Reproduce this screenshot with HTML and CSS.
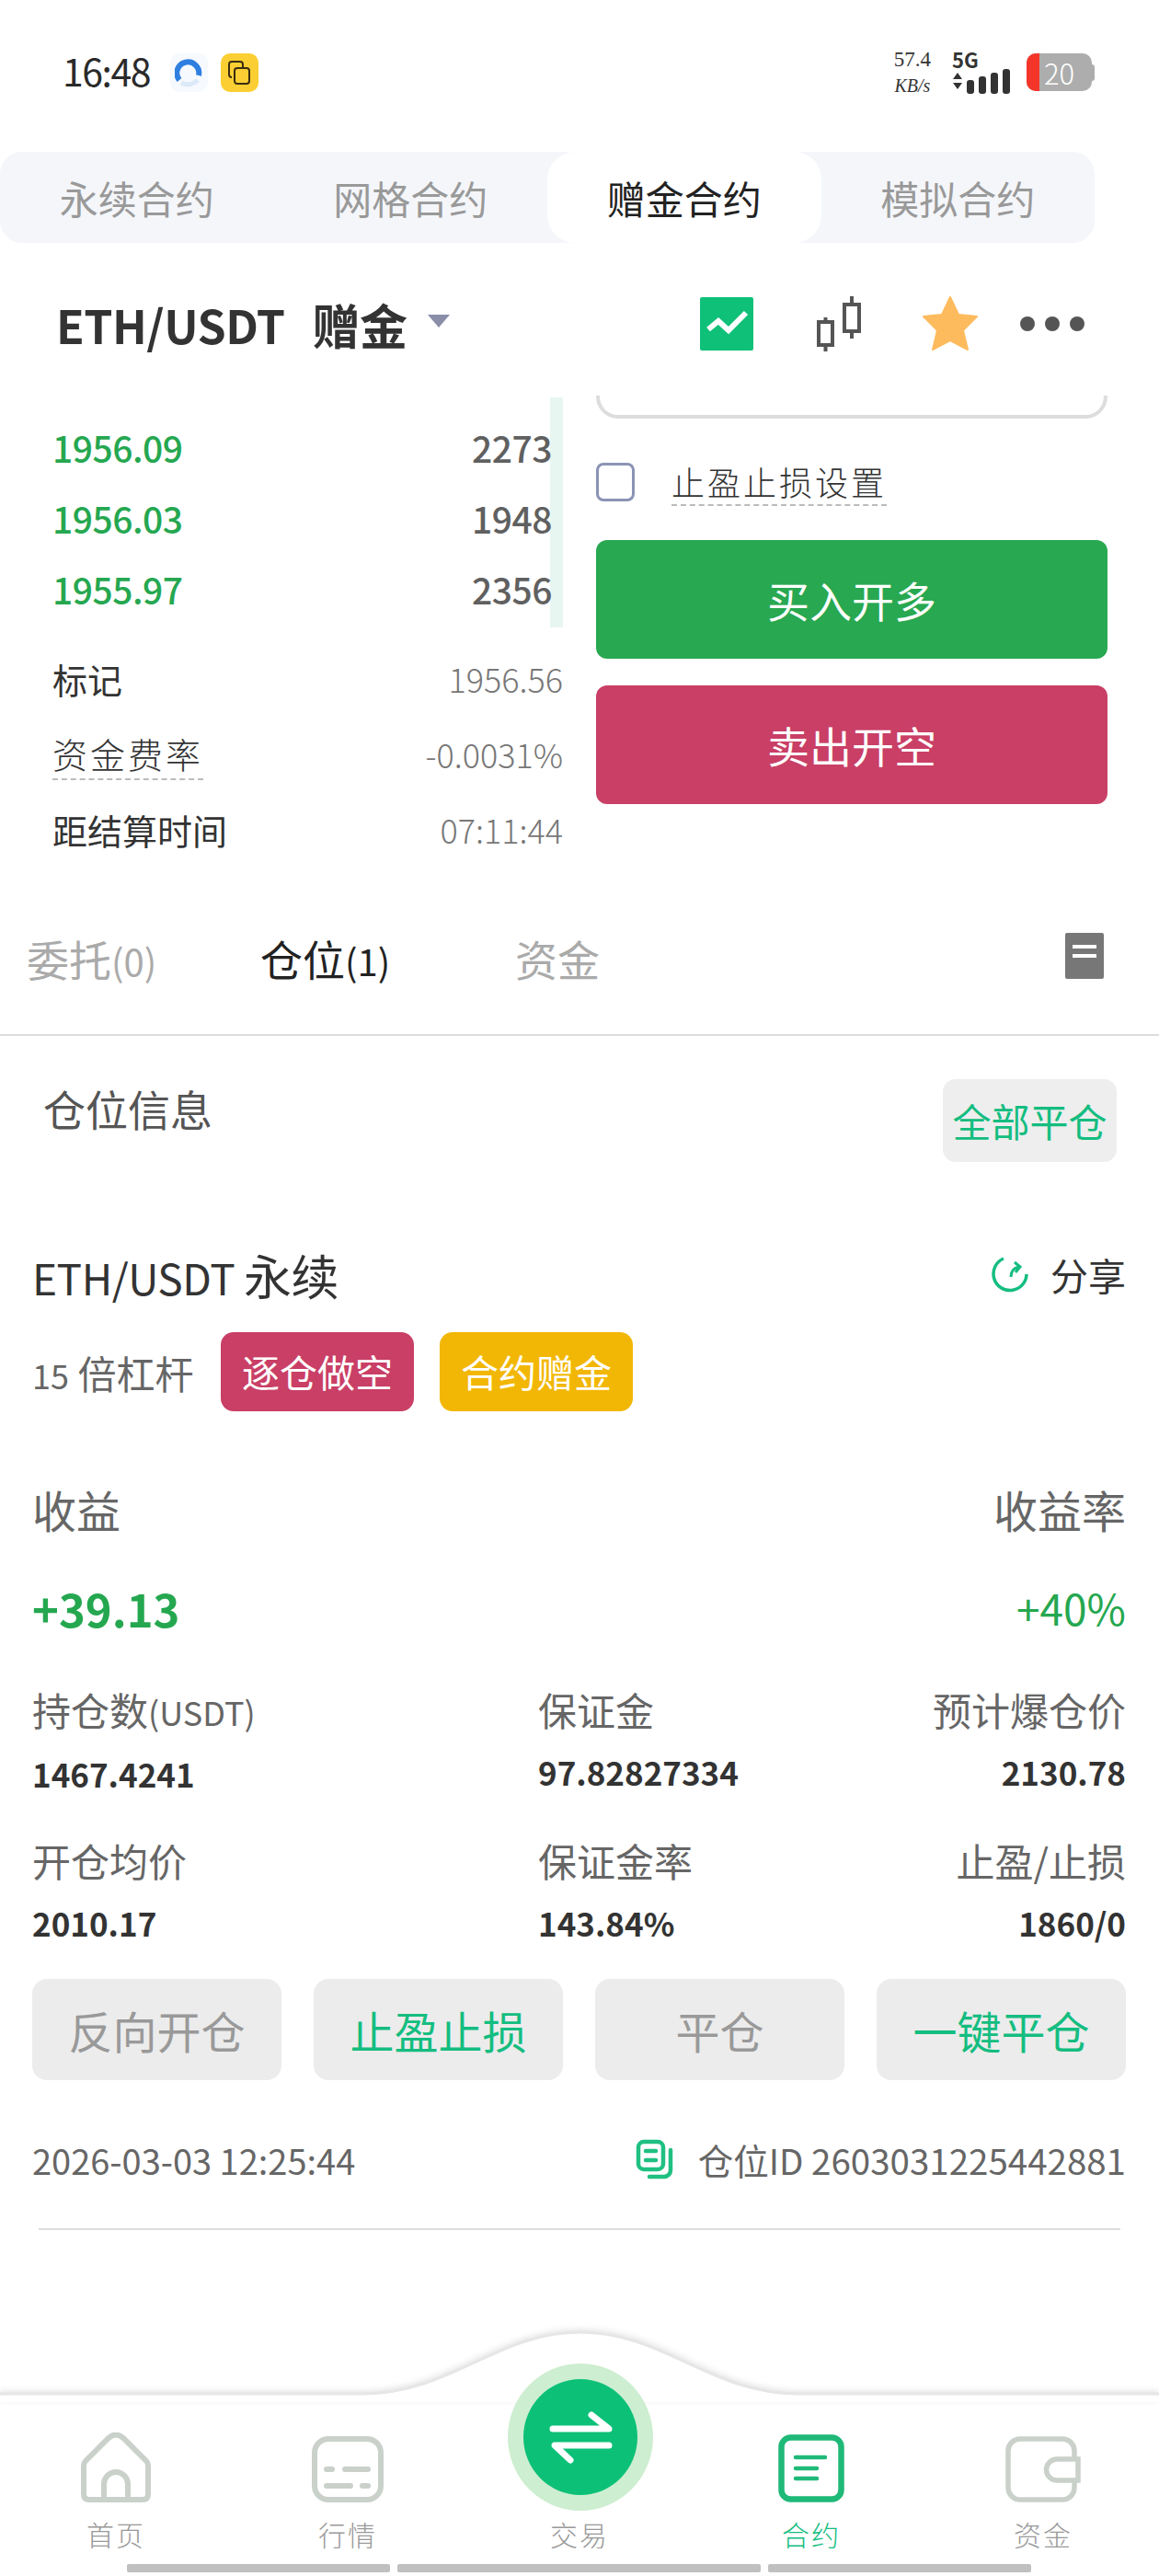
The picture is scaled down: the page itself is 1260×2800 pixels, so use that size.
FILE: index.html
```html
<!DOCTYPE html>
<html lang="zh-CN">
<head>
    <meta charset="UTF-8">
    <meta name="viewport" content="width=device-width, initial-scale=1.0">
    <title>赠金合约</title>
    <link rel="stylesheet" href="styles.css">
</head>
<body>
    <div class="page">
        <div class="status">
            <div class="status-left">
                <span class="clock">16:48</span>
                <span class="app-icon app-blue">
                    <svg width="30" height="32" viewBox="0 0 30 32" fill="none"><path d="M5 24A12 12 0 1 1 26 19" stroke="#2f7fe0" stroke-width="6"/><path d="M7 27c6 3 13 2 18-3" stroke="#dbe9f8" stroke-width="5"/></svg>
                </span>
                <span class="app-icon app-yellow">
                    <svg width="26" height="28" viewBox="0 0 26 28" fill="none" stroke="#3a2c10" stroke-width="2"><path d="M5 19q-3 0-3-3V5q0-3 3-3h9q3 0 3 3v4"/><rect x="8" y="9" width="16" height="17" rx="3"/></svg>
                </span>
            </div>
            <div class="status-right">
                <div class="speed"><span>57.4</span><span class="speed-unit">KB/s</span></div>
                <div class="signal">
                    <span class="net">5G</span>
                    <svg width="66" height="30" viewBox="0 0 66 30" fill="#333"><path d="M1 11 6 4l5 7zM1 15h10l-5 7z"/><rect x="16" y="12" width="8" height="15" rx="3"/><rect x="29" y="8" width="8" height="19" rx="3"/><rect x="42" y="4" width="8" height="23" rx="3"/><rect x="55" y="0" width="8" height="27" rx="3"/></svg>
                </div>
                <div class="battery"><span class="battery-low"></span><span class="battery-num">20</span></div>
                <span class="battery-tip"></span>
            </div>
        </div>

        <div class="mode-tabs">
            <div class="mode-tab">永续合约</div>
            <div class="mode-tab">网格合约</div>
            <div class="mode-tab active">赠金合约</div>
            <div class="mode-tab">模拟合约</div>
        </div>

        <div class="pair-bar">
            <div class="pair-name">ETH/USDT<span class="pair-kind">赠金</span><span class="caret"></span></div>
            <div class="pair-tools">
                <svg class="tool-chart" width="58" height="58" viewBox="0 0 58 58"><rect width="58" height="58" rx="2" fill="#0fc078"/><path d="M9 35l11-9 11 10 19-19" fill="none" stroke="#fff" stroke-width="6"/></svg>
                <svg class="tool-candle" width="48" height="60" viewBox="0 0 48 60" fill="none" stroke="#555" stroke-width="4"><rect x="2" y="28" width="15" height="25"/><path d="M9.500 23v5M9.500 53v7"/><rect x="30" y="9" width="16" height="29"/><path d="M38 0v9M38 38v8"/></svg>
                <svg class="tool-star" width="60" height="60" viewBox="0 0 60 60"><path d="M30 1l9 19 20 2-15 15 5 21-19-10-19 10 5-21L1 22l20-2z" fill="#fdbb5e" stroke="#fdbb5e" stroke-width="2" stroke-linejoin="round"/></svg>
                <div class="dots"><i></i><i></i><i></i></div>
            </div>
        </div>

        <div class="trade">
            <div class="book">
                <div class="depth">
                    <div class="level"><span class="price">1956.09</span><span class="qty">2273</span></div>
                    <div class="level"><span class="price">1956.03</span><span class="qty">1948</span></div>
                    <div class="level"><span class="price">1955.97</span><span class="qty">2356</span></div>
                </div>
                <div class="info-list">
                    <div class="info"><span>标记</span><span class="info-val">1956.56</span></div>
                    <div class="info"><span class="dashed thin">资金费率</span><span class="info-val">-0.0031%</span></div>
                    <div class="info"><span>距结算时间</span><span class="info-val">07:11:44</span></div>
                </div>
            </div>
            <div class="order">
                <div class="input-end"></div>
                <div class="tp-row"><span class="checkbox"></span><span class="dashed thin tp-label">止盈止损设置</span></div>
                <div class="order-btn buy">买入开多</div>
                <div class="order-btn sell">卖出开空</div>
            </div>
        </div>

        <div class="list-tabs">
            <span class="list-tab">委托<small>(0)</small></span>
            <span class="list-tab current">仓位<small>(1)</small></span>
            <span class="list-tab">资金</span>
            <svg class="doc" width="42" height="50" viewBox="0 0 42 50"><path d="M0 2a2 2 0 0 1 2-2h38a2 2 0 0 1 2 2v46a2 2 0 0 1-2 2H2a2 2 0 0 1-2-2z" fill="#777"/><path d="M8 15h26M8 25h26" stroke="#fff" stroke-width="4"/></svg>
        </div>

        <div class="pos-head">
            <span>仓位信息</span>
            <span class="close-all">全部平仓</span>
        </div>

        <div class="position">
            <div class="pos-title">
                <span class="symbol">ETH/USDT <em>永续</em></span>
                <span class="share">
                    <svg width="42" height="42" viewBox="0 0 42 42" fill="none" stroke="#14bd80" stroke-width="3.500"><path d="M13 4A18 18 0 1 0 38 21"/><path d="M21 24c0-6 3-10 9-11M25 8l6 5-5 6" stroke-width="3"/></svg>
                    分享
                </span>
            </div>
            <div class="tags">
                <span class="lever"><small>15</small> 倍杠杆</span>
                <span class="tag tag-red">逐仓做空</span>
                <span class="tag tag-yellow">合约赠金</span>
            </div>
            <div class="profit-labels"><span>收益</span><span>收益率</span></div>
            <div class="profit-values"><span class="profit">+39.13</span><span class="rate">+40%</span></div>
            <div class="stats">
                <div class="stat"><span class="stat-k">持仓数<small>(USDT)</small></span><b>1467.4241</b></div>
                <div class="stat"><span class="stat-k">保证金</span><b>97.82827334</b></div>
                <div class="stat end"><span class="stat-k">预计爆仓价</span><b>2130.78</b></div>
                <div class="stat"><span class="stat-k">开仓均价</span><b>2010.17</b></div>
                <div class="stat"><span class="stat-k">保证金率</span><b>143.84%</b></div>
                <div class="stat end"><span class="stat-k">止盈/止损</span><b>1860/0</b></div>
            </div>
            <div class="actions">
                <div class="action">反向开仓</div>
                <div class="action green">止盈止损</div>
                <div class="action">平仓</div>
                <div class="action green">一键平仓</div>
            </div>
            <div class="pos-foot">
                <span>2026-03-03 12:25:44</span>
                <span class="pos-id">
                    <svg width="42" height="44" viewBox="0 0 42 44" fill="none" stroke="#1fc082" stroke-width="4.500" stroke-linecap="round"><path d="M3 27V9a6 6 0 0 1 6-6h15a6 6 0 0 1 6 6v18a6 6 0 0 1-6 6H9a6 6 0 0 1-6-6z"/><path d="M11 13h11M11 23h11"/><path d="M38 12v22a7 7 0 0 1-7 7H15"/></svg>
                    仓位ID 2603031225442881
                </span>
            </div>
        </div>
        <div class="pos-line"></div>

        <div class="nav">
            <svg class="nav-curve" width="1260" height="80" viewBox="0 0 1260 80"><path d="M-10 71H394C490 71 540 4 631 4S772 71 868 71H1270V95H-10z" fill="#fff" stroke="#e6e6e6" stroke-width="3"/></svg>
            <div class="swap">
                <svg width="70" height="60" viewBox="0 0 70 60" fill="none" stroke="#fff" stroke-width="7" stroke-linecap="round" stroke-linejoin="round"><path d="M5 21H66L47 6M66 39H7l17 16"/></svg>
            </div>
            <div class="nav-items">
                <div class="nav-item">
                    <svg width="76" height="76" viewBox="0 0 76 76" fill="none" stroke="#c9d1ca" stroke-width="6"><path d="M3 36q0-3 2-5L30 6q8-7 16 0L71 31q2 2 2 5v31q0 6-6 6H9q-6 0-6-6z"/><path d="M25 73V56a13 13 0 0 1 26 0V73"/></svg>
                    <span>首页</span>
                </div>
                <div class="nav-item">
                    <svg width="78" height="72" viewBox="0 0 78 72" fill="none" stroke="#c9d1ca" stroke-linecap="round"><rect x="3" y="3" width="72" height="66" rx="15" stroke-width="6" /><path d="M16 36h6M36 36h25M16 54h26M55 54h6" stroke-width="6"/></svg>
                    <span>行情</span>
                </div>
                <div class="nav-item swap-item"><span>交易</span></div>
                <div class="nav-item on">
                    <svg width="72" height="74" viewBox="0 0 72 74" fill="none" stroke="#1fb978" stroke-linecap="round"><rect x="3.500" y="3.500" width="65" height="67" rx="10" stroke-width="6.500"/><path d="M19 25h32M19 37h23M19 48h23" stroke-width="4.500"/></svg>
                    <span>合约</span>
                </div>
                <div class="nav-item">
                    <svg width="82" height="72" viewBox="0 0 82 72" fill="none" stroke="#c9d1ca" stroke-width="5.500"><rect x="3" y="3" width="72" height="66" rx="13"/><path d="M79 25H56a11.500 11.500 0 0 0 0 23h23z" fill="#fff"/></svg>
                    <span>资金</span>
                </div>
            </div>
            <div class="home-bar"><i class="bar-a"></i><i class="bar-b"></i><i class="bar-a"></i></div>
        </div>
    </div>
</body>
</html>
```

FILE: styles.css
```css
* {
    box-sizing: border-box;
}
body {
    margin: 0;
    background: #fff;
    font-family: "Noto Sans CJK SC", "Noto Sans", sans-serif;
    color: #333;
}
small {
    font-size: inherit;
}
em {
    font-style: normal;
}
.page {
    position: relative;
    display: flex;
    flex-direction: column;
    width: 1260px;
    height: 2800px;
    overflow: hidden;
}

/* status bar */
.status {
    display: flex;
    justify-content: space-between;
    align-items: center;
    height: 165px;
    padding: 0 70px 8px 68px;
}
.status-left {
    display: flex;
    align-items: center;
}
.clock {
    margin: -5px 22px 0 0;
    font-size: 41px;
    letter-spacing: -1.500px;
    color: #2a2a2a;
}
.app-icon {
    display: flex;
    align-items: center;
    justify-content: center;
    width: 41px;
    height: 42px;
    border-radius: 10px;
    margin-right: 14px;
}
.app-blue {
    background: #f6f9fd;
}
.app-yellow {
    background: #fbcf33;
}
.status-right {
    display: flex;
    align-items: center;
}
.speed {
    display: flex;
    flex-direction: column;
    align-items: center;
    font-family: "Liberation Serif", serif;
    font-size: 23px;
    line-height: 28px;
    color: #333;
    margin-right: 23px;
}
.speed-unit {
    font-size: 20px;
    font-style: italic;
}
.signal {
    display: flex;
    flex-direction: column;
    width: 68px;
    margin-right: 13px;
}
.net {
    font-size: 22px;
    line-height: 22px;
    font-weight: 700;
}
.battery {
    display: flex;
    width: 71px;
    height: 41px;
    background: #adadad;
    border-radius: 10px;
}
.battery-low {
    width: 14px;
    background: #f5352a;
    border-radius: 10px 0 0 10px;
}
.battery-num {
    padding-left: 5px;
    font-size: 31px;
    line-height: 41px;
    font-weight: 300;
    color: #fff;
}
.battery-tip {
    width: 3px;
    height: 18px;
    background: #adadad;
    border-radius: 0 3px 3px 0;
}

/* contract tabs */
.mode-tabs {
    display: flex;
    width: 1190px;
    height: 99px;
    background: #f4f6fa;
    border-radius: 24px;
}
.mode-tab {
    flex: 1;
    text-align: center;
    font-size: 42px;
    line-height: 99px;
    color: #999;
}
.mode-tab.active {
    background: #fff;
    color: #222;
    border-radius: 30px;
}

/* pair header */
.pair-bar {
    display: flex;
    justify-content: space-between;
    align-items: center;
    height: 166px;
    padding: 10px 81px 0 61px;
}
.pair-name {
    display: flex;
    align-items: center;
    font-size: 50px;
    font-weight: 700;
    letter-spacing: -0.500px;
    color: #333;
}
.pair-kind {
    margin-left: 30px;
    font-size: 52px;
}
.caret {
    margin: 0 0 6px 22px;
    border-left: 12px solid transparent;
    border-right: 12px solid transparent;
    border-top: 14px solid #8a8ea8;
}
.pair-tools {
    display: flex;
    align-items: center;
}
.tool-chart {
    margin-right: 69px;
}
.tool-candle {
    margin-right: 67px;
}
.tool-star {
    margin-right: 46px;
}
.dots {
    display: flex;
    gap: 11px;
}
.dots i {
    width: 16px;
    height: 16px;
    border-radius: 50%;
    background: #555;
}

/* order book + order form */
.trade {
    display: flex;
    height: 530px;
}
.book {
    width: 648px;
    padding: 0 36px 0 57px;
}
.depth {
    position: relative;
    height: 250px;
    padding-top: 18px;
}
.depth::after {
    content: "";
    position: absolute;
    right: 0;
    top: 2px;
    width: 14px;
    height: 250px;
    background: #e8f6f2;
}
.level {
    position: relative;
    z-index: 1;
    display: flex;
    justify-content: space-between;
    height: 77px;
    padding-right: 12px;
    font-size: 39px;
    line-height: 77px;
    letter-spacing: -0.500px;
}
.price {
    color: #25a750;
    font-weight: 500;
}
.qty {
    color: #606060;
    font-weight: 500;
}
.info-list {
    padding-top: 16px;
}
.info {
    display: flex;
    justify-content: space-between;
    align-items: center;
    height: 82px;
    font-size: 38px;
    color: #333;
}
.info-val {
    font-size: 36px;
    color: #777;
    font-weight: 300;
}
.dashed {
    border-bottom: 2px dashed #bbb;
}
.thin {
    font-weight: 300;
    letter-spacing: 3px;
}
.order {
    flex: 1;
    padding-right: 56px;
}
.input-end {
    height: 25px;
    border: 4px solid #ddd;
    border-top: 0;
    border-radius: 0 0 24px 24px;
}
.tp-row {
    display: flex;
    align-items: center;
    height: 132px;
    padding-top: 6px;
}
.checkbox {
    width: 42px;
    height: 42px;
    border: 3px solid #8a94b5;
    border-radius: 8px;
    margin-right: 40px;
}
.tp-label {
    font-size: 36px;
    color: #333;
    line-height: 50px;
}
.order-btn {
    height: 129px;
    margin-bottom: 29px;
    border-radius: 12px;
    text-align: center;
    font-size: 46px;
    line-height: 129px;
    color: #fff;
}
.buy {
    background: #28a850;
}
.sell {
    background: #c93f66;
}

/* list tabs */
.list-tabs {
    display: flex;
    align-items: center;
    height: 166px;
    padding: 0 60px 2px 29px;
    border-bottom: 2px solid #ddd;
    font-size: 46px;
    color: #aaa;
}
.list-tab {
    width: 254px;
}
.list-tab small {
    font-size: 40px;
}
.list-tab.current {
    width: 277px;
    color: #222;
}
.doc {
    margin-left: auto;
    margin-top: -4px;
}

/* position */
.pos-head {
    display: flex;
    justify-content: space-between;
    align-items: center;
    height: 136px;
    margin-top: 14px;
    padding: 0 46px 0 47px;
    font-size: 46px;
    color: #555;
}
.pos-head span:first-child {
    margin-top: -8px;
}
.close-all {
    width: 189px;
    height: 90px;
    background: #eee;
    border-radius: 14px;
    text-align: center;
    font-size: 42px;
    line-height: 90px;
    color: #14bd80;
    margin-top: 20px;
}
.position {
    padding: 0 36px 0 35px;
}
.pos-title {
    display: flex;
    justify-content: space-between;
    align-items: center;
    height: 100px;
    margin-top: 59px;
}
.symbol {
    font-size: 46px;
    letter-spacing: -0.500px;
    color: #333;
}
.symbol em {
    font-size: 52px;
}
.share {
    display: flex;
    align-items: center;
    gap: 22px;
    font-size: 41px;
    color: #333;
}
.tags {
    display: flex;
    align-items: center;
    height: 86px;
    margin-top: 13px;
}
.lever {
    width: 205px;
    font-size: 42px;
    color: #666;
}
.lever small {
    font-size: 36px;
}
.tag {
    width: 210px;
    height: 86px;
    margin-right: 28px;
    border-radius: 14px;
    text-align: center;
    font-size: 41px;
    line-height: 84px;
    color: #fff;
}
.tag-red {
    background: #c93f66;
}
.tag-yellow {
    background: #f2b705;
}
.profit-labels {
    display: flex;
    justify-content: space-between;
    margin-top: 71px;
    font-size: 48px;
    line-height: 70px;
    color: #666;
}
.profit-values {
    display: flex;
    justify-content: space-between;
    align-items: center;
    height: 72px;
    margin-top: 36px;
    color: #25a750;
}
.profit {
    font-size: 49px;
    font-weight: 700;
}
.rate {
    font-size: 46px;
}
.stats {
    display: grid;
    grid-template-columns: 550px 1fr 1fr;
    grid-auto-rows: 164px;
    margin-top: 47px;
}
.stat {
    display: flex;
    flex-direction: column;
    gap: 15px;
}
.stat.end {
    align-items: flex-end;
}
.stat-k {
    font-size: 42px;
    line-height: 56px;
    color: #666;
}
.stat-k small {
    font-size: 36px;
}
.stat b {
    font-size: 35px;
    line-height: 50px;
    font-weight: 700;
    color: #333;
}
.actions {
    display: grid;
    grid-template-columns: repeat(4, 1fr);
    gap: 35px;
    margin-top: -7px;
}
.action {
    height: 110px;
    background: #ececec;
    border-radius: 16px;
    text-align: center;
    font-size: 48px;
    line-height: 110px;
    color: #999;
}
.action.green {
    color: #14bd80;
}
.pos-foot {
    display: flex;
    justify-content: space-between;
    align-items: center;
    height: 60px;
    margin-top: 56px;
    font-size: 38px;
    color: #666;
}
.pos-id {
    display: flex;
    align-items: center;
    gap: 26px;
    font-size: 38.500px;
}
.pos-line {
    height: 2px;
    margin: 45px 42px 0;
    background: #ddd;
}

/* bottom nav */
.nav {
    position: relative;
    margin-top: auto;
    height: 269px;
}
.nav-curve {
    position: absolute;
    left: 0;
    top: 0;
    filter: drop-shadow(0 -2px 3px rgba(0, 0, 0, 0.1));
}
.swap {
    position: absolute;
    left: 552px;
    top: 38px;
    display: flex;
    align-items: center;
    justify-content: center;
    width: 158px;
    height: 160px;
    background: #0cc078;
    border: 17px solid #cdeed0;
    border-radius: 50%;
}
.nav-items {
    position: relative;
    display: flex;
    padding-top: 107px;
}
.nav-item {
    display: flex;
    flex-direction: column;
    align-items: center;
    justify-content: flex-end;
    width: 252px;
    height: 134px;
    color: #999;
}
.nav-item span {
    margin-top: 16px;
    font-size: 30px;
    line-height: 36px;
    font-weight: 300;
    letter-spacing: 2px;
}
.nav-item.on span {
    color: #14bd80;
}
.home-bar {
    position: absolute;
    left: 138px;
    bottom: 4px;
    display: flex;
    gap: 8px;
}
.home-bar i {
    height: 9px;
    background: #c0c0c0;
    border-radius: 2px;
}
.bar-a {
    width: 286px;
}
.bar-b {
    width: 395px;
}
```
